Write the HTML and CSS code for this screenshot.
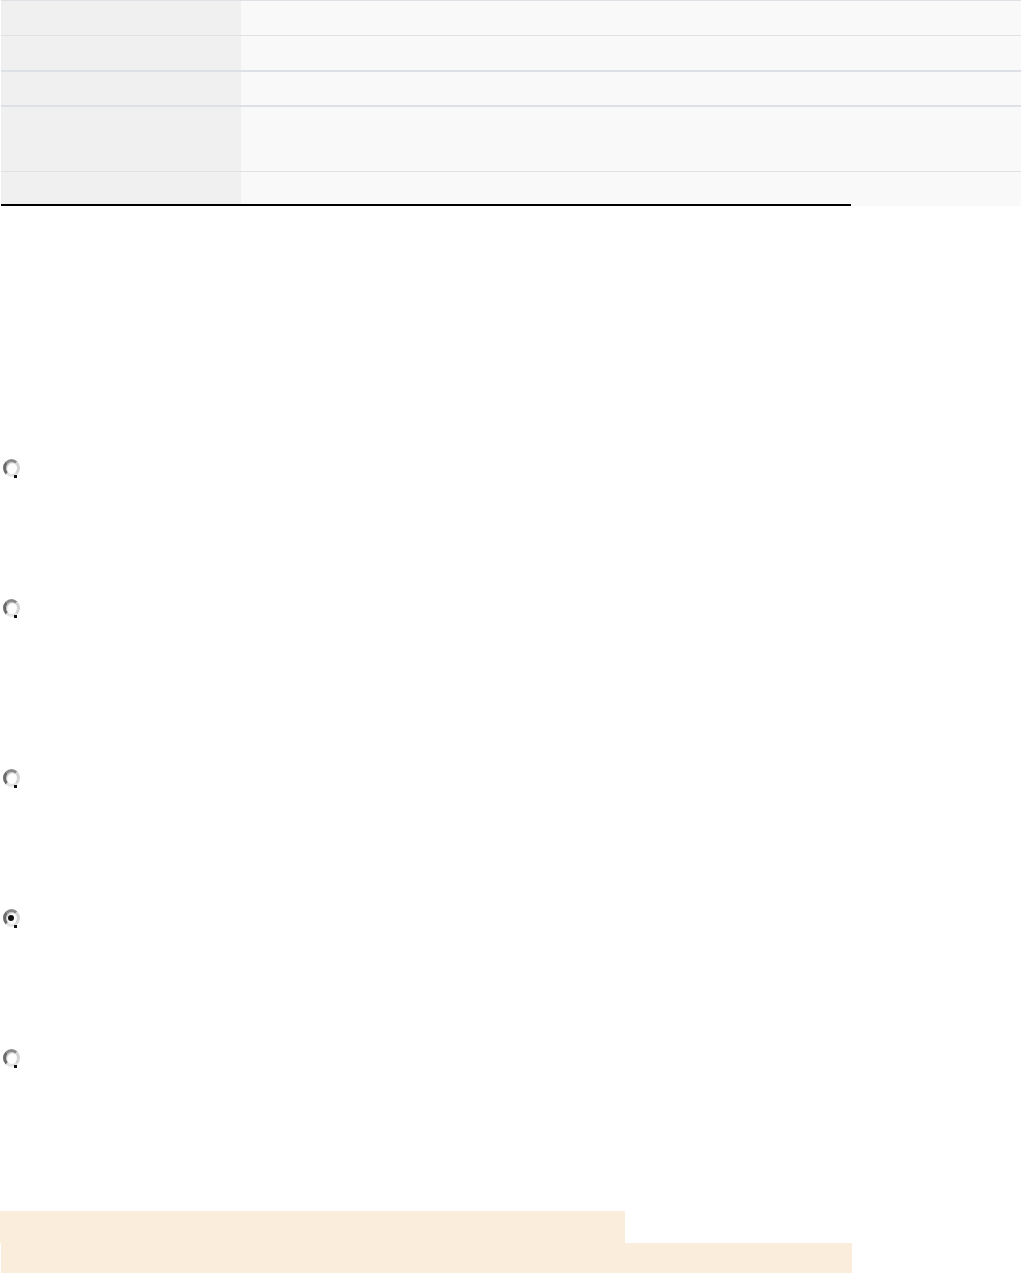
FILE: index.html
```html
<!DOCTYPE html>
<html lang="en">
<head>
<meta charset="utf-8">
<title>Form</title>
<link rel="stylesheet" href="styles.css">
</head>
<body>
<div class="sheet">
  <div class="table">
    <div class="row r1"><div class="th"></div><div class="td"></div></div>
    <div class="row r2 blue"><div class="th"></div><div class="td"></div></div>
    <div class="row r3 blue"><div class="th"></div><div class="td"></div></div>
    <div class="row r4"><div class="th"></div><div class="td"></div></div>
    <div class="row r5 last"><div class="th"></div><div class="td"></div></div>
  </div>
  <div class="rule-row"><div class="rule"></div><div class="rule-rest"></div></div>
</div>

<div class="options">
  <div class="opt o1"><span class="radio"></span></div>
  <div class="opt o2"><span class="radio"></span></div>
  <div class="opt o3"><span class="radio"></span></div>
  <div class="opt o4"><span class="radio checked"></span></div>
  <div class="opt o5"><span class="radio"></span></div>
</div>

<div class="notice">
  <div class="n1"></div>
  <div class="n2"></div>
</div>
</body>
</html>
```

FILE: styles.css
```css
html, body {
  margin: 0;
  padding: 0;
  background: #ffffff;
  font-family: "Liberation Sans", Arial, sans-serif;
}

.sheet {
  width: 1020px;
  margin-left: 1px;
}

.table {
  border-top: 1px solid #dde1e6;
}

.row {
  display: flex;
  border-bottom: 1px solid #e2e2e2;
}

.row.blue {
  border-bottom: 2px solid #dde1e6;
}

.row.last {
  border-bottom: none;
}

.th {
  width: 240px;
  flex: none;
  background: #f0f0f0;
}

.td {
  flex: 1;
  background: #f9f9f9;
}

.r1 { height: 34px; }
.r2 { height: 34px; }
.r3 { height: 33px; }
.r4 { height: 64px; }
.r5 { height: 32px; }

.rule-row {
  display: flex;
  height: 2px;
}

.rule {
  width: 850px;
  flex: none;
  background: #000000;
}

.rule-rest {
  flex: 1;
  background: #f9f9f9;
}

.options {
  padding-top: 253px;
  display: flex;
  flex-direction: column;
}

.opt {
  padding-left: 3px;
}

.o1, .o3, .o4 { height: 140px; }
.o2 { height: 170px; }
.o5 { height: 162px; }

.radio {
  display: block;
  position: relative;
  width: 11px;
  height: 12px;
  border-radius: 50%;
  border: 3px solid;
  border-color: #8a8a8a #d4d4d4 #e4e4e4 #6a6a6a;
  background: #ffffff;
  box-shadow: inset 1px 1px 1px #c4c4c4;
  margin-top: 0;
}

.radio::after {
  content: "";
  position: absolute;
  right: 0;
  bottom: -4px;
  width: 3px;
  height: 3px;
  background: #111111;
}

.radio.checked::before {
  content: "";
  position: absolute;
  left: 2px;
  top: 3px;
  width: 6px;
  height: 6px;
  border-radius: 50%;
  background: #111111;
}

.notice {
  display: flex;
  flex-direction: column;
}

.n1 {
  width: 625px;
  height: 32px;
  background: #faeddc;
}

.n2 {
  width: 851px;
  height: 30px;
  margin-left: 1px;
  background: #faeddc;
}
```
